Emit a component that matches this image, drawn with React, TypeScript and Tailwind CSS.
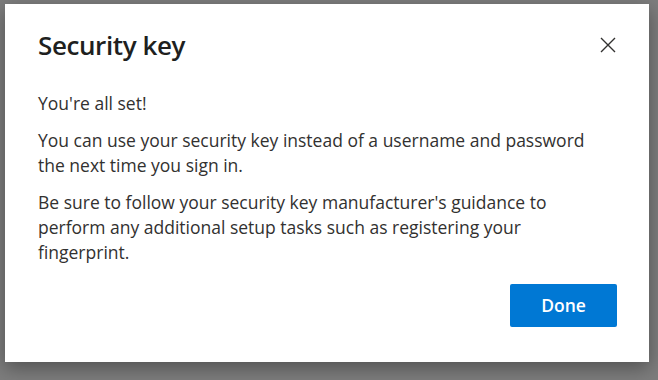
import React from "react";

function CloseIcon() {
  return (
    <svg width="16" height="16" viewBox="0 0 16 16" fill="none">
      <path d="M1 1L15 15M15 1L1 15" stroke="#323130" strokeWidth="1.4" />
    </svg>
  );
}

export default function App() {
  return (
    <div className="w-[658px] h-[380px] bg-[#7d7d7d] pt-[4px] pl-[5px] overflow-hidden">
      <div
        className="w-[644px] h-[358px] bg-white flex flex-col shadow-[0_6px_18px_rgba(0,0,0,0.35)]"
        style={{ fontFamily: '"Open Sans", "Noto Sans", sans-serif' }}
      >
        <div className="flex items-start justify-between pl-[33px] pr-[33px] pt-[25px]">
          <h1 className="text-[26px] leading-[32px] font-semibold text-[#201f1e] tracking-[-0.4px]">
            Security key
          </h1>
          <button className="mt-[8px]">
            <CloseIcon />
          </button>
        </div>
        <div className="flex flex-col gap-3 pl-[33px] pr-[20px] mt-[30px] text-[17.5px] leading-[25px] text-[#323130]">
          <p>You're all set!</p>
          <p>
            You can use your security key instead of a username and password
            <br />
            the next time you sign in.
          </p>
          <p>
            Be sure to follow your security key manufacturer's guidance to
            <br />
            perform any additional setup tasks such as registering your
            <br />
            fingerprint.
          </p>
        </div>
        <div className="mt-auto flex justify-end pr-[32px] pb-[35px]">
          <button className="w-[107px] h-[43px] bg-[#0078d4] rounded-[2px] text-white text-[17.5px] font-semibold">
            Done
          </button>
        </div>
      </div>
    </div>
  );
}
